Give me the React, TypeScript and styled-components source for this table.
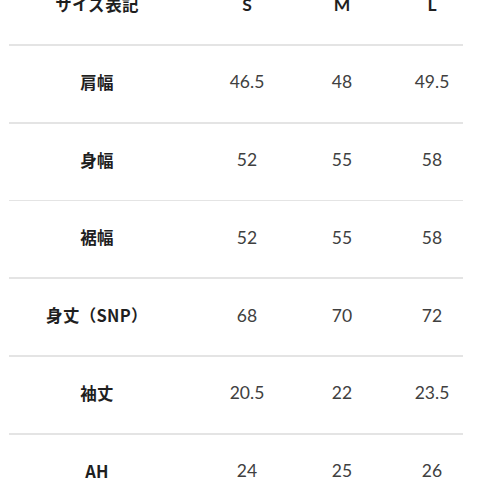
import React from 'react';
import styled, { createGlobalStyle } from 'styled-components';

const GlobalStyle = createGlobalStyle`
  html, body {
    margin: 0;
    padding: 0;
    background: #ffffff;
    overflow: hidden;
  }
  body {
    font-family: 'Lato', 'Noto Sans CJK JP', sans-serif;
  }
`;

const Page = styled.div`
  width: 498px;
  height: 498px;
  overflow: hidden;
  background: #ffffff;
`;

const Table = styled.div`
  margin-top: -32px;
  display: flex;
  flex-direction: column;
`;

const Row = styled.div`
  display: grid;
  grid-template-columns: 176px 124px 66px 114px;
  align-items: center;
  height: 72px;
  padding-bottom: 4px;
  margin-left: 9px;
`;

const Separator = styled.div`
  width: 454px;
  height: 1.8px;
  margin-left: 9px;
  background: #e4e4e4;
`;

const Label = styled.div`
  text-align: center;
  font-family: 'Noto Sans CJK JP', 'Noto Sans', sans-serif;
  font-weight: 700;
  font-size: 16.5px;
  color: #1f1f1f;
  letter-spacing: 0.3px;
`;

const Cell = styled.div`
  text-align: center;
  font-family: 'Lato', sans-serif;
  font-size: 17.5px;
  font-weight: 400;
  color: #404040;
`;

const HeadCell = styled(Cell)`
  font-weight: 700;
  color: #1f1f1f;
`;

const rows = [
  { label: '肩幅', values: ['46.5', '48', '49.5'] },
  { label: '身幅', values: ['52', '55', '58'] },
  { label: '裾幅', values: ['52', '55', '58'] },
  { label: '身丈（SNP）', values: ['68', '70', '72'] },
  { label: '袖丈', values: ['20.5', '22', '23.5'] },
  { label: 'AH', values: ['24', '25', '26'] },
];

const App: React.FC = () => (
  <Page>
    <GlobalStyle />
    <Table>
      <Row>
        <Label>サイズ表記</Label>
        <HeadCell>S</HeadCell>
        <HeadCell>M</HeadCell>
        <HeadCell>L</HeadCell>
      </Row>
      {rows.map((r) => (
        <React.Fragment key={r.label}>
          <Separator />
          <Row>
            <Label>{r.label}</Label>
            {r.values.map((v, i) => (
              <Cell key={i}>{v}</Cell>
            ))}
          </Row>
        </React.Fragment>
      ))}
    </Table>
  </Page>
);

export default App;
